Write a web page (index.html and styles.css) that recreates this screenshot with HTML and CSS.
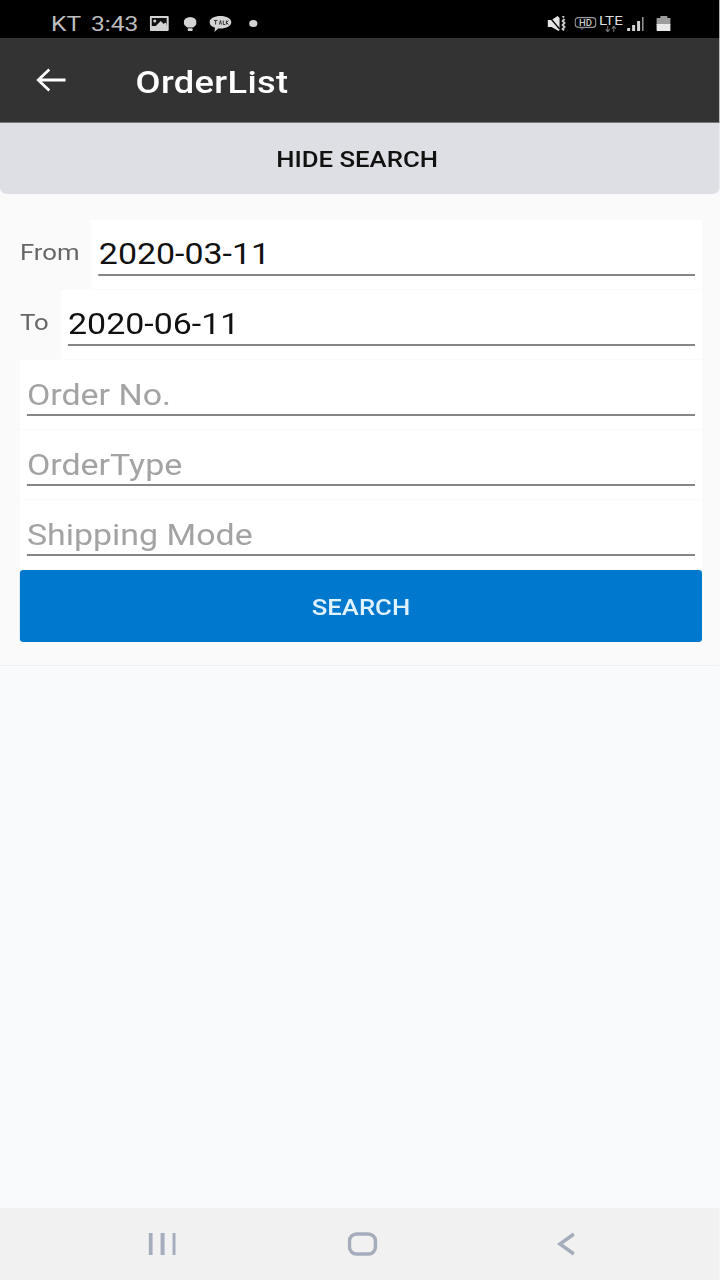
FILE: index.html
```html
<!DOCTYPE html>
<html lang="en">
<head>
    <meta charset="UTF-8">
    <meta name="viewport" content="width=device-width, initial-scale=1.0">
    <title>OrderList</title>
    <link rel="stylesheet" href="styles.css">
</head>
<body>
    <div class="container">
        <div class="status-bar">
            <div class="status-left">
                <span class="carrier">KT</span>
                <span class="clock">3:43</span>
                <svg class="icon-gallery" viewBox="0 0 19 15" preserveAspectRatio="none">
                    <rect width="19" height="15" rx="1" fill="#d4d4d4"/>
                    <rect x="2" y="2" width="15" height="8" fill="#111"/>
                    <circle cx="5" cy="5" r="1.500" fill="#d4d4d4"/>
                    <path d="M6 10l5-5 3 3 1.500-1.500L17 8v3H6z" fill="#d4d4d4"/>
                </svg>
                <svg class="icon-bulb" viewBox="0 0 13 14" preserveAspectRatio="none">
                    <path d="M6.500 0A6.500 5.500 0 0 1 13 5.500C13 7.500 11.500 9 9.500 10.500h-6C1.500 9 0 7.500 0 5.500A6.500 5.500 0 0 1 6.500 0z" fill="#d4d4d4"/>
                    <rect x="4" y="11.200" width="5" height="2.800" rx="1" fill="#d4d4d4"/>
                </svg>
                <svg class="icon-talk" viewBox="0 0 22 16" preserveAspectRatio="none">
                    <path d="M11 0c6 0 11 2.700 11 6.300s-5 6.300-11 6.300c-.8 0-1.500 0-2.200-.2L5 16l.6-4.300C2.200 10.600 0 8.700 0 6.300 0 2.700 5 0 11 0z" fill="#d4d4d4"/>
                    <path d="M4.500 4.500h3.500M6.200 4.500v4M10 8.500l1-4 1 4M13.800 4.500v4h2M17 4.500v4M19 4.500l-2 2 2 2" stroke="#333" stroke-width="1" fill="none"/>
                </svg>
                <span class="dot"></span>
            </div>
            <div class="status-right">
                <svg class="icon-mute" viewBox="0 0 20 15" preserveAspectRatio="none">
                    <path d="M0 4h4l6-4 2 2v12l-1 1-7-4H0z" fill="#e6e6e6"/>
                    <path d="M1 0l11 13" stroke="#000" stroke-width="1.300"/>
                    <path d="M15 0l1.500 1.500M17 3l-2 2 2 2-2 2 2 2-2 2 1.500 1.500" stroke="#c8c8c8" stroke-width="1.800" fill="none"/>
                </svg>
                <svg class="icon-hd" viewBox="0 0 22 13" preserveAspectRatio="none">
                    <rect x="0.700" y="0.700" width="20.600" height="9.600" rx="3" fill="none" stroke="#9a9a9a" stroke-width="1.200"/>
                    <path d="M5 10l2.500 2.500L10 10" stroke="#777" stroke-width="1" fill="none"/>
                    <text x="11" y="9" font-family="Roboto" font-size="9.500" font-weight="500" fill="#ccc" text-anchor="middle">HD</text>
                </svg>
                <div class="lte">
                    <span>LTE</span>
                    <svg viewBox="0 0 14 6" preserveAspectRatio="none">
                        <path d="M4 0v5M2 3l2 3 2-3M10 6V1M8 3l2-3 2 3" stroke="#777" stroke-width="1" fill="none"/>
                    </svg>
                </div>
                <svg class="icon-signal" viewBox="0 0 17 14" preserveAspectRatio="none">
                    <rect y="11" width="3" height="3" fill="#d4d4d4"/>
                    <rect x="5" y="8" width="3" height="6" fill="#d4d4d4"/>
                    <rect x="10" y="4" width="3" height="10" fill="#d4d4d4"/>
                    <rect x="15" width="2" height="14" fill="#a0a0a0"/>
                </svg>
                <svg class="icon-battery" viewBox="0 0 15 15" preserveAspectRatio="none">
                    <path d="M4 0h7v2h3a1 1 0 0 1 1 1v6H0V3a1 1 0 0 1 1-1h3z" fill="#9c9c9c"/>
                    <path d="M0 8h15v6a1 1 0 0 1-1 1H1a1 1 0 0 1-1-1z" fill="#e8e8e8"/>
                </svg>
            </div>
        </div>

        <div class="app-bar">
            <svg class="back-arrow" viewBox="0 0 30 24" preserveAspectRatio="none">
                <path d="M30 12H2M13 1.500L2 12l11 10.500" stroke="#fff" stroke-width="2.800" fill="none"/>
            </svg>
            <h1>OrderList</h1>
        </div>

        <div class="search-toggle">HIDE SEARCH</div>

        <div class="search-panel">
            <div class="form-row">
                <label>From</label>
                <div class="field"><span class="value">2020-03-11</span></div>
            </div>
            <div class="form-row">
                <label>To</label>
                <div class="field"><span class="value">2020-06-11</span></div>
            </div>
            <div class="form-row">
                <div class="field"><span class="placeholder">Order No.</span></div>
            </div>
            <div class="form-row">
                <div class="field"><span class="placeholder">OrderType</span></div>
            </div>
            <div class="form-row">
                <div class="field"><span class="placeholder">Shipping Mode</span></div>
            </div>
            <button class="search-btn">SEARCH</button>
        </div>

        <div class="content"></div>

        <div class="nav-bar">
            <svg class="nav-recent" viewBox="0 0 28 24" preserveAspectRatio="none">
                <path d="M2 1v22M14 1v22M26 1v22" stroke="#a5adbd" stroke-width="4"/>
            </svg>
            <svg class="nav-home" viewBox="0 0 30 24" preserveAspectRatio="none">
                <rect x="2" y="2" width="26" height="20" rx="7" fill="none" stroke="#a5adbd" stroke-width="3.500"/>
            </svg>
            <svg class="nav-back" viewBox="0 0 18 24" preserveAspectRatio="none">
                <path d="M17 2L3 12l14 10" stroke="#a5adbd" stroke-width="3.500" fill="none"/>
            </svg>
        </div>
    </div>
</body>
</html>
```

FILE: styles.css
```css
body {
    margin: 0;
    padding: 0;
    background-color: #f9fafc;
    font-family: Roboto, "Liberation Sans", sans-serif;
}

/* the capture is stretched sideways, so lay out narrow and widen it all */
.container {
    display: flex;
    flex-direction: column;
    width: 615.4px;
    height: 1280px;
    overflow: hidden;
    transform: scaleX(1.17);
    transform-origin: left top;
    filter: blur(0.5px);
}

.status-bar {
    display: flex;
    justify-content: space-between;
    align-items: center;
    height: 38px;
    padding: 9px 42px 0 43.6px;
    box-sizing: border-box;
    background-color: #000;
    color: #bdbdbd;
    font-size: 21px;
}

.status-left,
.status-right {
    display: flex;
    align-items: center;
}

.clock {
    margin-left: 8.5px;
}

.icon-gallery {
    width: 16.2px;
    height: 15px;
    margin-left: 10px;
}

.icon-bulb {
    width: 11.1px;
    height: 14px;
    margin-left: 12.8px;
}

.icon-talk {
    width: 18.8px;
    height: 16px;
    margin-left: 11px;
}

.dot {
    width: 7px;
    height: 7px;
    margin-left: 15px;
    border-radius: 50%;
    background-color: #d4d4d4;
}

.icon-mute {
    width: 17.1px;
    height: 15px;
}

.icon-hd {
    width: 18.8px;
    height: 13px;
    margin-left: 6px;
}

.lte {
    display: flex;
    flex-direction: column;
    align-items: center;
    width: 18.8px;
    margin-left: 2.5px;
    color: #ddd;
    font-size: 13px;
    line-height: 10px;
}

.lte svg {
    display: block;
    width: 12px;
    height: 6px;
}

.icon-signal {
    width: 14.5px;
    height: 14px;
    margin-left: 4.3px;
}

.icon-battery {
    width: 12.8px;
    height: 15px;
    margin-left: 10.3px;
}

.app-bar {
    display: flex;
    align-items: center;
    height: 84px;
    padding-left: 30.8px;
    background-color: #333;
    border-bottom: 1px solid #777;
}

.back-arrow {
    flex-shrink: 0;
    width: 25.6px;
    height: 24px;
}

.app-bar h1 {
    margin: 0 0 0 59.5px;
    padding-top: 4px;
    color: #fff;
    font-size: 31px;
    font-weight: 500;
    letter-spacing: 0.3px;
}

.search-toggle {
    display: flex;
    justify-content: center;
    align-items: center;
    height: 71px;
    padding-right: 5px;
    padding-top: 2px;
    box-sizing: border-box;
    background-color: #dedfe4;
    border-radius: 0 0 6px 6px;
    color: #111;
    font-size: 22px;
    font-weight: 500;
}

.search-panel {
    display: flex;
    flex-direction: column;
    height: 472px;
    padding: 26px 15.4px 0 17px;
    box-sizing: border-box;
    background-color: #fafafa;
    border-bottom: 1px solid #f0f0f0;
}

.form-row {
    display: flex;
    align-items: center;
    height: 70px;
}

.form-row label {
    margin-right: 10.5px;
    padding-bottom: 6px;
    color: #666;
    font-size: 22px;
}

.field {
    flex: 1;
    align-self: stretch;
    display: flex;
    align-items: flex-end;
    margin-bottom: 1px;
    padding: 0 6px 13px;
    background-color: #fff;
    position: relative;
}

.field::after {
    content: "";
    position: absolute;
    left: 6px;
    right: 6px;
    bottom: 13px;
    border-bottom: 2px solid #868686;
}

.value,
.placeholder {
    font-size: 29px;
    line-height: 36px;
}

.value {
    padding-bottom: 4px;
    color: #111;
}

.placeholder {
    padding-bottom: 3px;
    color: #a3a3a3;
}

.search-btn {
    height: 72px;
    padding-top: 3px;
    border: none;
    border-radius: 3px;
    background-color: #0078cd;
    color: #dff2ff;
    font-family: inherit;
    font-size: 22px;
    font-weight: 500;
}

.content {
    flex: 1;
    background-color: #f9fafc;
}

.nav-bar {
    display: flex;
    justify-content: space-between;
    align-items: center;
    height: 72px;
    padding: 0 124px 0 126.5px;
    box-sizing: border-box;
    background-color: #f1f1f1;
}

.nav-recent {
    width: 23.9px;
    height: 24px;
}

.nav-home {
    width: 25.6px;
    height: 24px;
    margin-right: 6px;
}

.nav-back {
    width: 15.4px;
    height: 24px;
}
```
